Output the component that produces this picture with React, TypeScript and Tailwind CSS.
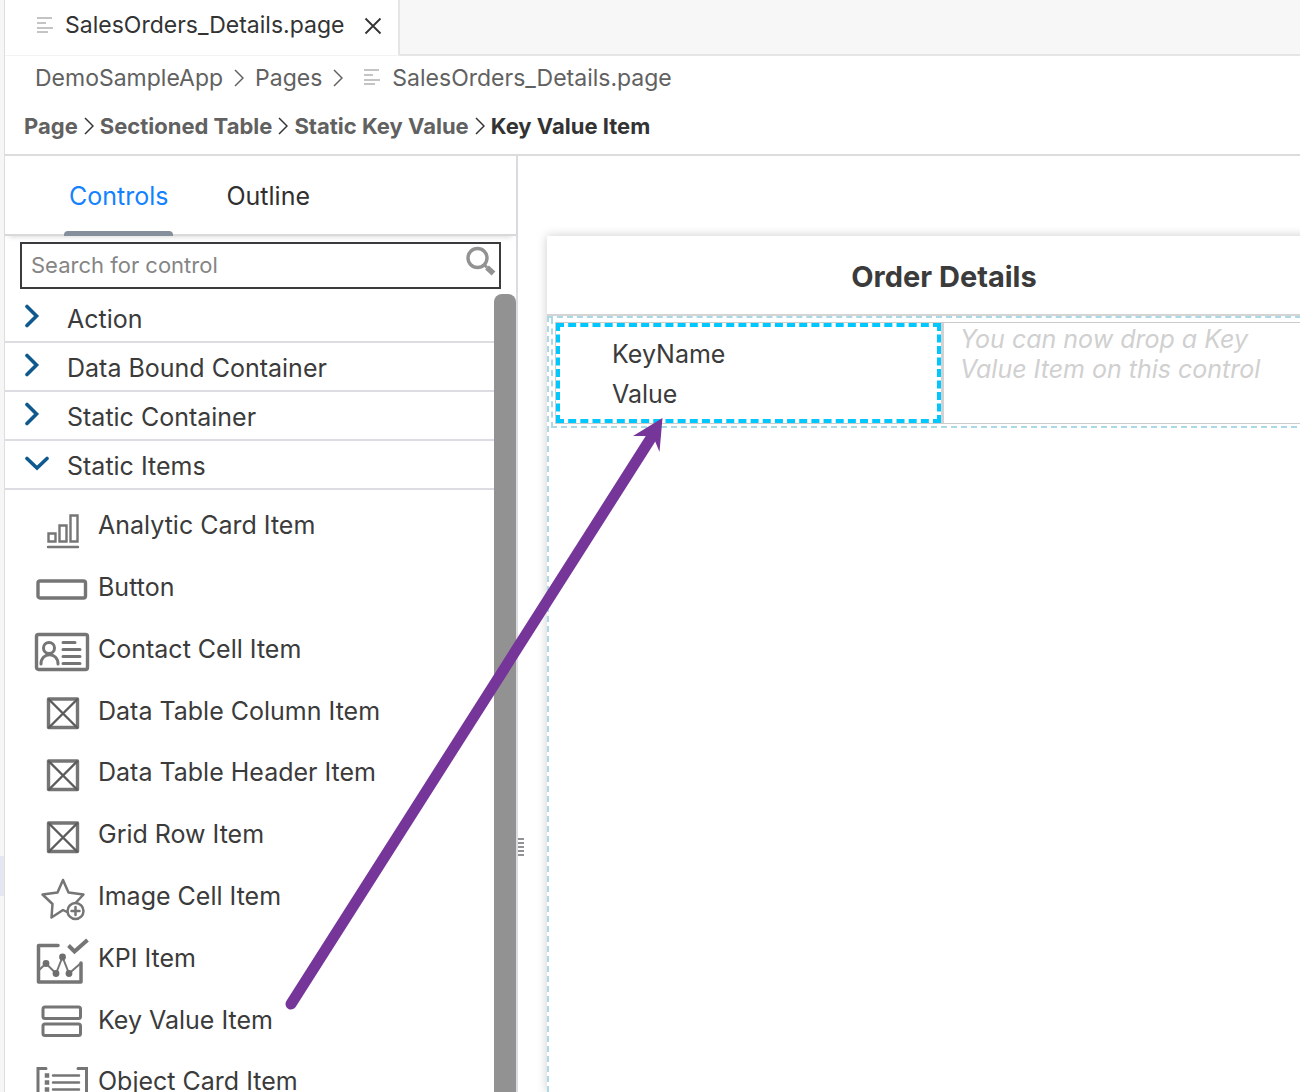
import React from 'react';

const stroke = { fill: 'none', stroke: '#757575', strokeLinecap: 'round', strokeLinejoin: 'round' } as const;

function Glyph({ children }: { children: React.ReactNode }) {
  return (
    <svg viewBox="0 0 56 62" className="h-[62px] w-14 shrink-0" aria-hidden="true" {...stroke}>
      {children}
    </svg>
  );
}

const Analytic = () => (
  <Glyph>
    <g strokeWidth="2.400" strokeLinejoin="miter">
      <path d="M14.500 38.500h7v8h-7zM25.500 30.500h7v16h-7zM36.500 20.500h7v26h-7z" />
      <path d="M14 52h30" />
    </g>
  </Glyph>
);
const ButtonGlyph = () => (
  <Glyph>
    <rect x="4" y="24" width="47.500" height="17" rx="2" strokeWidth="3.400" />
  </Glyph>
);
const Contact = () => (
  <Glyph>
    <rect x="2.500" y="15.500" width="51" height="35" rx="2" strokeWidth="3.400" />
    <circle cx="15" cy="29" r="5.500" strokeWidth="3" />
    <path d="M7 45c0-12.500 17-12.500 17 0" strokeWidth="3" />
    <path d="M29 23.500h12M29 30.500h17M29 37.500h17M29 44.500h17" strokeWidth="3" />
  </Glyph>
);
const Placeholder = () => (
  <Glyph>
    <rect x="14.500" y="19" width="29" height="28.500" strokeWidth="3.400" />
    <path d="M15 19.500l28 28M43 19.500l-28 28" strokeWidth="2.400" stroke="#5c5c5c" />
  </Glyph>
);
const Star = () => (
  <Glyph>
    <path d="M33 46l-4-2-11.500 7.500L18.500 38 8.500 28.500l15-2L29 14l5.500 12.500 15 2L42 36.500" strokeWidth="2.500" />
    <circle cx="41.500" cy="45" r="8" strokeWidth="2.500" />
    <path d="M41.500 41v8M37.500 45h8" strokeWidth="2.500" />
  </Glyph>
);
const Kpi = () => (
  <Glyph>
    <path d="M24 17.500H4.500v36.500H47V35" strokeWidth="3.500" />
    <path d="M4 43l8-7.500 10 10L28.500 29 35 45.500l12-10.500" strokeWidth="2" />
    <g fill="#6e6e6e" stroke="none">
      <circle cx="12" cy="35.500" r="3.400" />
      <circle cx="22" cy="45.500" r="3.400" />
      <circle cx="28.500" cy="29" r="3.400" />
      <circle cx="35" cy="45.500" r="3.400" />
    </g>
    <path d="M34.500 17.500l6 6L53.500 12" strokeWidth="4" strokeLinecap="butt" strokeLinejoin="miter" />
  </Glyph>
);
const KeyValue = () => (
  <Glyph>
    <rect x="9" y="18" width="37.500" height="11.500" rx="2" strokeWidth="3" />
    <rect x="9" y="35" width="37.500" height="11.500" rx="2" strokeWidth="3" />
  </Glyph>
);
const ObjectCard = () => (
  <Glyph>
    <path d="M12 17.500H4V62M44 17.500h8.500V62" strokeWidth="3" strokeLinejoin="miter" />
    <path d="M19 24.500h26M19 31.500h26M19 38.500h26" strokeWidth="2.500" />
    <path d="M13 24.500h.010M13 31.500h.010M13 38.500h.010" strokeWidth="4.500" strokeLinecap="square" />
  </Glyph>
);

const items: [string, () => React.JSX.Element][] = [
  ['Analytic Card Item', Analytic],
  ['Button', ButtonGlyph],
  ['Contact Cell Item', Contact],
  ['Data Table Column Item', Placeholder],
  ['Data Table Header Item', Placeholder],
  ['Grid Row Item', Placeholder],
  ['Image Cell Item', Star],
  ['KPI Item', Kpi],
  ['Key Value Item', KeyValue],
  ['Object Card Item', ObjectCard],
];

const groups = [
  { label: 'Action', open: false },
  { label: 'Data Bound Container', open: false },
  { label: 'Static Container', open: false },
  { label: 'Static Items', open: true },
];

function FileIcon() {
  return (
    <svg viewBox="0 0 16 18" className="h-[18px] w-4 shrink-0" stroke="#c4c4c4" strokeWidth="2" aria-hidden="true">
      <path d="M0 1h15M0 6h9M0 11h16M0 15h11" />
    </svg>
  );
}

function Separator({ className }: { className: string }) {
  return (
    <svg viewBox="0 0 10 18" className={`h-[18px] w-2.5 shrink-0 ${className}`} fill="none" stroke="currentColor" strokeWidth="1.500" aria-hidden="true">
      <path d="M1 1l8 8-8 8" />
    </svg>
  );
}

function Sidebar() {
  return (
    <aside className="flex w-[513px] shrink-0 flex-col border-r-2 border-[#dcdce0]">
      <div role="tablist" className="flex h-20 shrink-0 items-stretch gap-[49px] border-b-2 border-[#d9d9d9] pl-[59px] text-[25px] shadow-[0_4px_6px_-4px_rgba(0,0,0,0.2)]">
        <button role="tab" aria-selected="true" className="relative px-[5px] pt-1 text-[#1482ff]">
          Controls
          <span className="absolute inset-x-0 -bottom-0.5 h-[5px] rounded-t bg-[#858f9b]" />
        </button>
        <button role="tab" aria-selected="false" className="px-1 pt-1 text-[#303030]">Outline</button>
      </div>
      <div className="relative mt-1.5 mr-[15px] ml-[15px] shrink-0">
        <input
          type="text"
          aria-label="Search for control"
          placeholder="Search for control"
          className="block h-[47px] w-full border-2 border-[#3b3b3d] bg-white pb-px pl-[9px] text-[22px] text-[#333] outline-none placeholder:text-[#858585]"
        />
        <svg viewBox="0 0 30 30" className="absolute top-1 right-[5px] size-[30px]" fill="none" stroke="#929292" aria-hidden="true">
          <circle cx="11.500" cy="12" r="9.500" strokeWidth="3.400" />
          <path d="M19 19.500l2 2" strokeWidth="3" />
          <path d="M21 21.500l6.500 6" strokeWidth="5.500" />
        </svg>
      </div>
      <div className="mt-[5px] flex min-h-0 flex-1">
        <div className="min-w-0 flex-1 overflow-hidden">
          {groups.map((g) => (
            <button key={g.label} aria-expanded={g.open} className="flex h-[49px] w-full items-center border-b-2 border-[#dcdce2] pt-1 pl-5 text-left text-[25px] text-[#3b3b3b]">
              <svg viewBox="0 0 24 24" className="-mt-2 mr-[18px] size-6 shrink-0" fill="none" stroke="#0e5a8f" strokeWidth="3.600" strokeLinecap="round" aria-hidden="true">
                <path d={g.open ? 'M2 7.500l10 9.500L22 7.500' : 'M2 2.500l9.500 9.500L2 21.500'} />
              </svg>
              {g.label}
            </button>
          ))}
          <ul className="mt-[5px] grid h-[618px] auto-rows-fr">
            {items.map(([label, Icon]) => (
              <li key={label} className="flex items-center gap-2 pl-[29px] text-[25px] text-[#3b3b3b]">
                <Icon />
                <span>{label}</span>
              </li>
            ))}
          </ul>
        </div>
        <div className="w-[22px] shrink-0 rounded-t-lg bg-[#929292]" />
      </div>
    </aside>
  );
}

function Canvas() {
  return (
    <main className="flex min-w-0 flex-1 overflow-hidden">
      <div className="flex w-[29px] shrink-0 flex-col items-start pt-[682px]">
        <div className="flex flex-col gap-px">
          {[0, 1, 2, 3, 4].map((n) => (
            <span key={n} className="h-[3px] w-1.5 border-t-2 border-[#929292]" />
          ))}
        </div>
      </div>
      <section className="mt-20 -mr-[41px] flex flex-1 flex-col shadow-[0_0_10px_rgba(0,0,0,0.2)]">
        <h1 className="flex h-20 shrink-0 items-center justify-center border-b-2 border-[#d4d4d4] pt-1 text-[29px] font-bold text-[#3b3b3b]">
          Order Details
        </h1>
        <div className="flex-1 border-2 border-b-0 border-dashed border-[#add8e6]">
          <div className="mx-0.5 border-2 border-t-0 border-dashed border-[#add8e6] px-0.5 pt-1 pb-0.5">
            <div className="grid grid-cols-2 border border-[#cccccc]">
              <div className="h-[100px] border-r-[3px] border-[#d2d2d2]">
                <div className="flex h-full flex-col border-4 border-dashed border-[#00c8ff] pt-[7px] pl-[52px] text-[25px] leading-10 text-[#3b3b3b]">
                  <p>KeyName</p>
                  <p>Value</p>
                </div>
              </div>
              <p className="pt-px pr-[60px] pl-4 text-[25px] leading-[30px] text-[#d0d0d0] italic">
                You can now drop a Key Value Item on this control
              </p>
            </div>
          </div>
        </div>
      </section>
    </main>
  );
}

export default function App() {
  return (
    <div className="relative flex h-screen overflow-hidden bg-white font-['Inter',sans-serif]">
      <div className="w-[5px] shrink-0 border-r border-[#dedede] bg-[#f6f6f6]">
        <div className="mt-[856px] h-10 bg-[#e4e6f1]" />
      </div>
      <div className="flex min-w-0 flex-1 flex-col">
        <div className="flex h-14 shrink-0 bg-[#f7f7f7]">
          <div className="flex items-center gap-3 border-r-2 border-b border-r-[#e5e5e5] border-b-[#f3f3f3] bg-white pr-4 pb-1 pl-8 text-[23px] text-[#333]">
            <FileIcon />
            <span>SalesOrders_Details.page</span>
            <button aria-label="Close" className="ml-2">
              <svg viewBox="0 0 18 18" className="size-[18px]" stroke="#333" strokeWidth="1.800" aria-hidden="true">
                <path d="M1.500 1.500l15 15M16.500 1.500l-15 15" />
              </svg>
            </button>
          </div>
          <div className="flex-1 border-b-2 border-[#e5e5e5]" />
        </div>
        <nav aria-label="File path" className="flex h-11 shrink-0 items-center pl-[30px] text-[23px] text-[#616161]">
          <a href="#app">DemoSampleApp</a>
          <Separator className="mx-[11px]" />
          <a href="#pages">Pages</a>
          <Separator className="mr-[21px] ml-[11px]" />
          <FileIcon />
          <a href="#file" className="ml-3">SalesOrders_Details.page</a>
        </nav>
        <nav aria-label="Control path" className="flex h-14 shrink-0 items-center border-b-2 border-[#dcdcdc] pb-0.5 pl-[19px] text-[22px] font-bold text-[#616161]">
          <a href="#page">Page</a>
          <Separator className="mx-1.5 text-[#333]" />
          <a href="#table">Sectioned Table</a>
          <Separator className="mx-1.5 text-[#333]" />
          <a href="#keyvalue">Static Key Value</a>
          <Separator className="mx-1.5 text-[#333]" />
          <a href="#item" className="text-[#333]">Key Value Item</a>
        </nav>
        <div className="flex min-h-0 flex-1">
          <Sidebar />
          <Canvas />
        </div>
      </div>
      <svg viewBox="0 0 390 600" className="pointer-events-none absolute top-[414px] left-[280px] h-[600px] w-[390px]" aria-hidden="true">
        <path d="M11 590L371 24" stroke="#763599" strokeWidth="11" strokeLinecap="round" />
        <path d="M382.500 4L353 22l16 0 6 5 4.500 11z" fill="#763599" />
      </svg>
    </div>
  );
}
